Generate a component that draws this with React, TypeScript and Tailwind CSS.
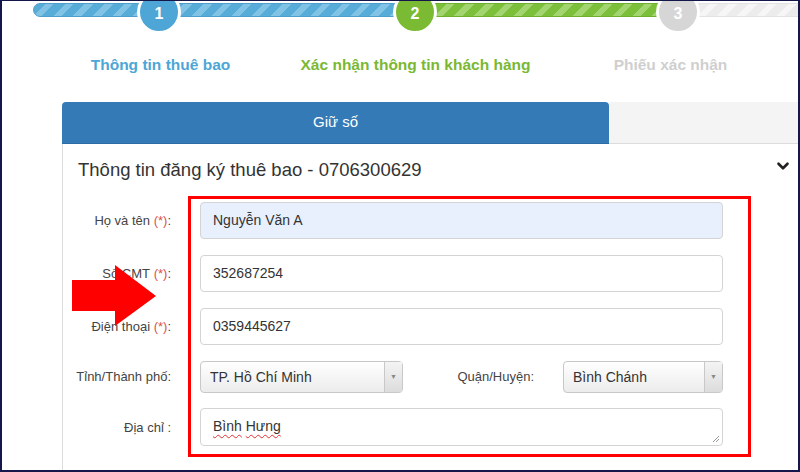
import { ChevronDown } from 'lucide-react';

const fields = [
  { label: 'Họ và tên', req: true, value: 'Nguyễn Văn A', fill: true },
  { label: 'Số CMT', req: true, value: '352687254' },
  { label: 'Điện thoại', req: true, value: '0359445627' },
];

function Select({ value, width }: { value: string; width: string }) {
  return (
    <div className={`flex h-[32px] ${width} rounded-[4px] border border-[#c8c8c8] bg-[linear-gradient(#ffffff,#ececec)] text-[14px] text-[#333]`}>
      <div className="flex flex-1 items-center pl-[9px]">{value}</div>
      <div className="flex w-[18px] items-center justify-center border-l border-[#c8c8c8] bg-[linear-gradient(#f4f4f4,#dcdcdc)] text-[7px] text-[#888]">▼</div>
    </div>
  );
}

export default function App() {
  return (
    <div className="relative h-[472px] w-[800px] overflow-hidden border-x-2 border-b-2 border-t border-[#15164a] bg-white font-['Liberation_Sans',Arial,sans-serif]">
      {/* stepper */}
      <div className="relative h-[99px]">
        <div className="ml-[31px] mt-[2px] flex h-[14px]">
          <div className="w-[382px] rounded-l-full border border-[#4f9fcc] bg-[repeating-linear-gradient(135deg,#58acd8_0px,#58acd8_8px,#80c3e5_8px,#80c3e5_14px)]" />
          <div className="w-[263px] border-y border-[#6fae2e] bg-[repeating-linear-gradient(135deg,#7cbf3a_0px,#7cbf3a_8px,#a2d46f_8px,#a2d46f_14px)]" />
          <div className="flex-1 border-y border-[#e2e2e2] bg-[repeating-linear-gradient(135deg,#ececec_0px,#ececec_8px,#f6f6f6_8px,#f6f6f6_14px)]" />
        </div>
        <div className="absolute left-[135px] top-[-13px] flex h-[44px] w-[44px] items-center justify-center rounded-full border-[3px] border-white bg-[#4ea6d6] pt-[3px] text-[16px] font-bold text-white">1</div>
        <div className="absolute left-[391px] top-[-13px] flex h-[44px] w-[44px] items-center justify-center rounded-full border-[3px] border-white bg-[#7bbb33] pt-[3px] text-[16px] font-bold text-white">2</div>
        <div className="absolute left-[654px] top-[-13px] flex h-[44px] w-[44px] items-center justify-center rounded-full border-[3px] border-white bg-[#d6d6d6] pt-[3px] text-[16px] font-bold text-white">3</div>
        <div className="ml-[31px] mt-[36px] flex text-[15.5px] font-bold">
          <div className="w-[260px] text-center text-[#4da6d6]">Thông tin thuê bao</div>
          <div className="w-[260px] text-center text-[#7ab833]">Xác nhận thông tin khách hàng</div>
          <div className="w-[260px] text-center text-[#cfcfcf]">Phiếu xác nhận</div>
        </div>
      </div>

      <div className="ml-[60px]">
        {/* tabs */}
        <div className="flex h-[42px]">
          <div className="flex w-[547px] items-center justify-center rounded-t-[4px] border-b border-[#2e6da4] bg-[#337ab7] text-[15px] text-white">Giữ số</div>
          <div className="flex-1 border-b border-[#dcdcdc] bg-[#f4f4f4]" />
        </div>

        {/* panel */}
        <div className="border-l border-[#dddddd]">
          <div className="flex h-[52px] items-start justify-between pl-[15px] pr-[6px] pt-[12px]">
            <div className="text-[18.5px] text-[#333]">Thông tin đăng ký thuê bao - 0706300629</div>
            <ChevronDown size={18} strokeWidth={3.5} className="mt-[1px] text-[#222]" />
          </div>

          <div className="flex">
            <div className="flex w-[125px] flex-col gap-[16px] pr-[17px] pt-[6px] text-right text-[13px] text-[#444]">
              {fields.map((f) => (
                <div key={f.label} className="flex h-[37px] items-center justify-end">
                  {f.label}&nbsp;<span className="text-[#d9534f]">(*)</span>:
                </div>
              ))}
              <div className="flex h-[32px] items-center justify-end">Tỉnh/Thành phố:</div>
              <div className="flex h-[38px] items-center justify-end">Địa chỉ :</div>
            </div>

            <div className="flex w-[563px] flex-col gap-[16px] border-[3px] border-[#ff0000] pb-[8px] pl-[9px] pt-[3px]">
              {fields.map((f) => (
                <div
                  key={f.value}
                  className={`flex h-[37px] w-[523px] items-center rounded-[4px] border border-[#d4d4d4] pl-[12px] text-[14px] text-[#333] ${f.fill ? 'bg-[#e8f0fe] text-[#222]' : 'bg-white'}`}
                >
                  {f.value}
                </div>
              ))}
              <div className="flex items-center">
                <Select value="TP. Hồ Chí Minh" width="w-[203px]" />
                <div className="w-[160px] pr-[29px] text-right text-[13px] text-[#444]">Quận/Huyện:</div>
                <Select value="Bình Chánh" width="w-[160px]" />
              </div>
              <div className="relative -mt-[1px] h-[38px] w-[523px] rounded-[4px] border border-[#d4d4d4] pl-[12px] pt-[7px] text-[14px] text-[#333]">
                <span className="underline decoration-[#e03030] decoration-wavy decoration-1 underline-offset-[3px]">Bình</span>{' '}
                <span className="underline decoration-[#e03030] decoration-wavy decoration-1 underline-offset-[3px]">Hưng</span>
                <svg className="absolute bottom-[2px] right-[2px]" width="8" height="8" viewBox="0 0 8 8">
                  <path d="M7 1 L1 7 M7 4 L4 7" stroke="#999" strokeWidth="1" />
                </svg>
              </div>
            </div>
          </div>

          <div className="mt-[10px] pl-[15px] text-[18.5px] text-[#333]">Thông tin giấy tờ tùy thân</div>
        </div>
      </div>

      {/* red annotation arrow */}
      <svg className="absolute left-[70px] top-[264px]" width="86" height="62" viewBox="0 0 86 62">
        <polygon points="0,15 43,15 43,0 84,31 43,61 43,46 0,46" fill="#ff0000" />
      </svg>
    </div>
  );
}
